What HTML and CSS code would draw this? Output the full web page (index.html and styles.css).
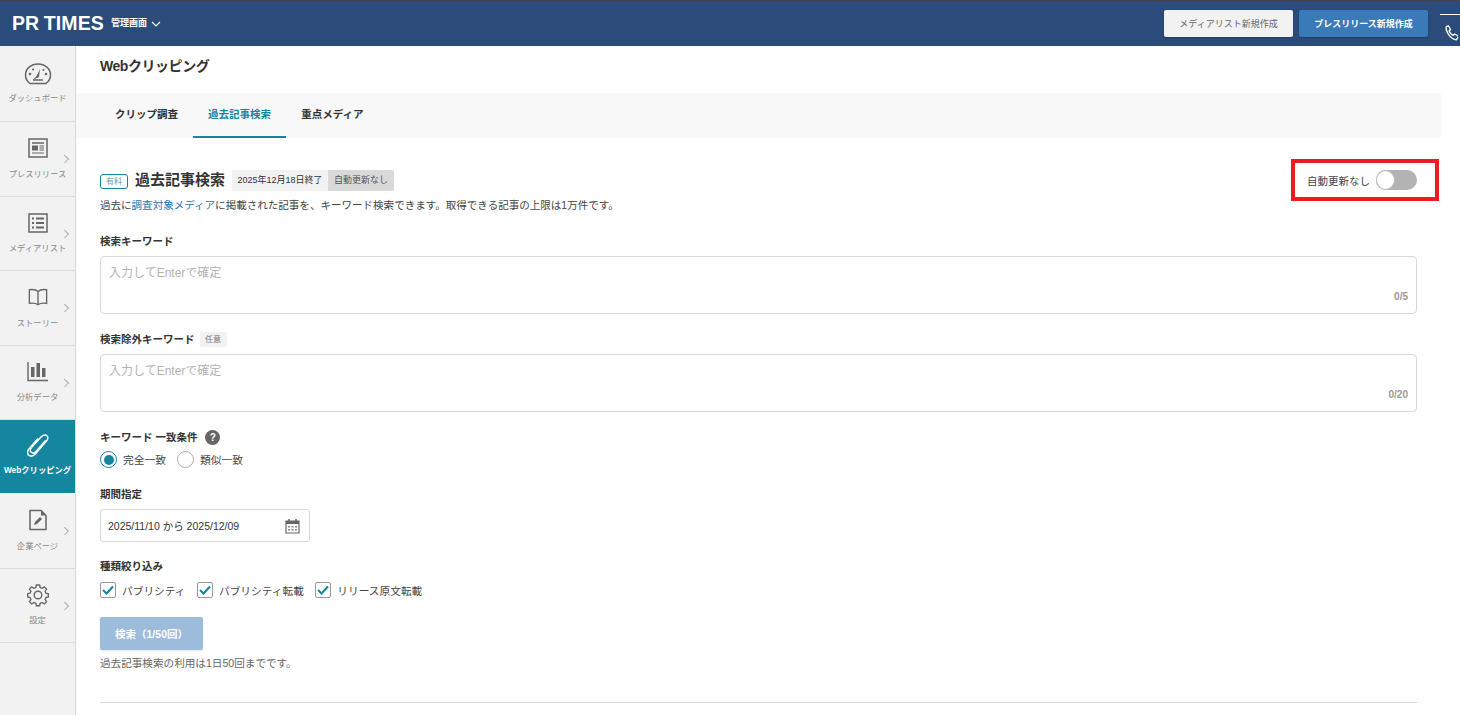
FILE: index.html
```html
<!DOCTYPE html>
<html lang="ja">
<head>
<meta charset="utf-8">
<title>Webクリッピング</title>
<link rel="stylesheet" href="styles.css">
</head>
<body>
<header class="topbar">
  <div class="brand">
    <span class="logo">PR TIMES</span>
    <span class="admin">管理画面</span>
    <svg class="admin-caret" width="10" height="6" viewBox="0 0 10 6"><path d="M1 1l4 4 4-4" fill="none" stroke="#fff" stroke-width="1.2"/></svg>
  </div>
  <div class="top-actions">
    <button class="btn-top btn-light">メディアリスト新規作成</button>
    <button class="btn-top btn-blue">プレスリリース新規作成</button>
    <div class="phone">
      <svg width="16" height="16" viewBox="0 0 16 16"><path d="M2.2 1.5L4.6 1l2 3.6-1.500 1.400c.7 1.800 2.200 3.400 4 4.300l1.500-1.300 3.400 2" fill="none" stroke="#fff" stroke-width="1.300"/><path d="M2.200 1.500C1.500 6 6 14 12.500 14.800l1.500-2.800" fill="none" stroke="#fff" stroke-width="1.300"/></svg>
    </div>
  </div>
</header>
<div class="shell">
  <nav class="sidebar">
    <a class="nav-item">
      <svg class="nav-icon" width="28" height="24" viewBox="0 0 28 24"><path d="M6 21.500h16c2.500-1.800 4.500-4.800 4.500-8.500C26.500 6.800 21 2 14 2S1.500 6.800 1.500 13c0 3.700 2 6.700 4.500 8.500z" fill="none" stroke="#666" stroke-width="1.500"/><path d="M9 18l6-3 1-8-3.500 7z" fill="#666"/><path d="M9 18h10" stroke="#666" stroke-width="1.500"/><circle cx="6" cy="12" r="1.300" fill="#666"/><circle cx="22" cy="12" r="1.300" fill="#666"/><circle cx="9" cy="7.500" r="1.100" fill="#666"/><circle cx="19.500" cy="8" r="1.100" fill="#666"/></svg>
      <span class="nav-label">ダッシュボード</span>
    </a>
    <a class="nav-item has-sub">
      <svg class="nav-icon" width="20" height="20" viewBox="0 0 20 20"><rect x="1" y="1" width="18" height="18" fill="none" stroke="#666" stroke-width="1.500"/><path d="M4 5h12" stroke="#666" stroke-width="1.500"/><rect x="4" y="7.500" width="6" height="5" fill="#666"/><path d="M11.500 8h4.500M11.500 10h4.500M11.500 12h4.500M4 15h12" stroke="#666" stroke-width="1.200"/></svg>
      <span class="nav-label">プレスリリース</span>
    </a>
    <a class="nav-item has-sub">
      <svg class="nav-icon" width="20" height="20" viewBox="0 0 20 20"><rect x="1" y="1" width="18" height="18" fill="none" stroke="#666" stroke-width="1.500"/><path d="M4 5.500h2M4 10h2M4 14.500h2M8 5.500h8M8 10h8M8 14.500h8" stroke="#666" stroke-width="1.800"/></svg>
      <span class="nav-label">メディアリスト</span>
    </a>
    <a class="nav-item has-sub">
      <svg class="nav-icon" width="20" height="20" viewBox="0 0 22 20"><path d="M11 4C9 2 5 1.500 1.500 2v15c3.500-.5 7.500 0 9.500 1.500 2-1.500 6-2 9.500-1.500V2C17 1.500 13 2 11 4zM11 4v14" fill="none" stroke="#666" stroke-width="1.500"/></svg>
      <span class="nav-label">ストーリー</span>
    </a>
    <a class="nav-item has-sub">
      <svg class="nav-icon" width="22" height="20" viewBox="0 0 22 20"><path d="M1 0v18.500h20" fill="none" stroke="#666" stroke-width="1.400"/><rect x="4" y="5" width="3.500" height="10" fill="#666"/><rect x="9.500" y="1" width="3.500" height="14" fill="#666"/><rect x="15" y="6" width="3.500" height="9" fill="#666"/></svg>
      <span class="nav-label">分析データ</span>
    </a>
    <a class="nav-item active">
      <svg class="nav-icon" width="22" height="24" viewBox="0 0 22 24"><path d="M18.500 6.500L9 17.500c-1.500 1.700-3.500 1.900-4.800.8-1.300-1.100-1.200-3.200.3-4.900L14.500 2.600c2.300-2.300 5-2 6 0 .7 1.500 0 3.400-1.500 5L8.500 19.800c-2.200 2.500-5 3-6.700 1.400C.2 19.700.3 17 2.300 14.600L11 4.500" fill="none" stroke="#fff" stroke-width="1.500"/></svg>
      <span class="nav-label">Webクリッピング</span>
    </a>
    <a class="nav-item has-sub">
      <svg class="nav-icon" width="18" height="21" viewBox="0 0 18 21"><path d="M1 1h11l5 5v14H1z" fill="none" stroke="#666" stroke-width="1.500"/><path d="M12 1v5h5z" fill="#666"/><path d="M5 15.500l1-3 5-5 2 2-5 5z" fill="#666"/></svg>
      <span class="nav-label">企業ページ</span>
    </a>
    <a class="nav-item has-sub">
      <svg class="nav-icon" width="24" height="24" viewBox="0 0 24 24"><circle cx="12" cy="12" r="3.800" fill="none" stroke="#666" stroke-width="1.400"/><path d="M10.200 1.500h3.600l.6 2.800 2.200.9 2.400-1.600 2.500 2.500-1.600 2.400.9 2.200 2.700.6v3.600l-2.700.6-.9 2.200 1.600 2.400-2.500 2.500-2.400-1.600-2.200.9-.6 2.700h-3.600l-.6-2.700-2.200-.9-2.400 1.600-2.500-2.500 1.600-2.400-.9-2.200-2.700-.6v-3.600l2.700-.6.9-2.200-1.600-2.400 2.500-2.500 2.400 1.600 2.200-.9z" transform="translate(1.200 .6) scale(.9)" fill="none" stroke="#666" stroke-width="1.500"/></svg>
      <span class="nav-label">設定</span>
    </a>
  </nav>
  <main class="content">
    <h1 class="page-title">Webクリッピング</h1>
    <div class="tabs">
      <a class="tab">クリップ調査</a>
      <a class="tab tab-active">過去記事検索</a>
      <a class="tab">重点メディア</a>
    </div>
    <section class="panel">
      <div class="panel-head">
        <div class="head-left">
          <span class="paid">有料</span>
          <h2 class="section-title">過去記事検索</h2>
          <span class="meta"><span class="meta-date">2025年12月18日終了</span><span class="meta-auto">自動更新なし</span></span>
        </div>
        <div class="auto-box">
          <span>自動更新なし</span>
          <span class="switch"><span class="knob"></span></span>
        </div>
      </div>
      <p class="desc">過去に<a class="link">調査対象メディア</a>に掲載された記事を、キーワード検索できます。取得できる記事の上限は1万件です。</p>

      <div class="field-label first">検索キーワード</div>
      <div class="textbox"><span class="ph">入力してEnterで確定</span><span class="count">0/5</span></div>

      <div class="field-label second">検索除外キーワード<span class="optional">任意</span></div>
      <div class="textbox"><span class="ph">入力してEnterで確定</span><span class="count">0/20</span></div>

      <div class="field-label third">キーワード 一致条件<span class="help">?</span></div>
      <div class="options radios">
        <label class="opt"><span class="radio on"></span>完全一致</label>
        <label class="opt"><span class="radio"></span>類似一致</label>
      </div>

      <div class="field-label fourth">期間指定</div>
      <div class="datebox">
        <span>2025/11/10 から 2025/12/09</span>
        <svg width="15" height="16" viewBox="0 0 15 16"><path d="M1 3h13v12H1z" fill="none" stroke="#666" stroke-width="1.200"/><path d="M1 3h13v3H1z" fill="#666"/><path d="M4 1v3M11 1v3" stroke="#666" stroke-width="1.500"/><path d="M3 8h2v1.500H3zM6.500 8h2v1.500h-2zM10 8h2v1.500h-2zM3 11h2v1.500H3zM6.500 11h2v1.500h-2zM10 11h2v1.500h-2z" fill="#888"/></svg>
      </div>

      <div class="field-label fifth">種類絞り込み</div>
      <div class="options checks">
        <label class="opt"><span class="check"><svg width="12" height="10" viewBox="0 0 12 10"><path d="M1 5l3.500 3.500L11 1.500" fill="none" stroke="#14869f" stroke-width="2"/></svg></span>パブリシティ</label>
        <label class="opt"><span class="check"><svg width="12" height="10" viewBox="0 0 12 10"><path d="M1 5l3.500 3.500L11 1.500" fill="none" stroke="#14869f" stroke-width="2"/></svg></span>パブリシティ転載</label>
        <label class="opt"><span class="check"><svg width="12" height="10" viewBox="0 0 12 10"><path d="M1 5l3.500 3.500L11 1.500" fill="none" stroke="#14869f" stroke-width="2"/></svg></span>リリース原文転載</label>
      </div>

      <button class="search-btn">検索（1/50回）</button>
      <p class="note">過去記事検索の利用は1日50回までです。</p>
      <hr class="rule">
    </section>
  </main>
</div>
</body>
</html>
```
FILE: styles.css
```css
* { box-sizing: border-box; }
html, body { margin: 0; height: 715px; overflow: hidden; }
body {
  font-family: "Liberation Sans", "Noto Sans CJK JP", sans-serif;
  color: #333;
  background: #fff;
  font-size: 11px;
}
button { font-family: inherit; border: 0; }
.topbar {
  height: 46px;
  background: #2b4b7a;
  border-top: 1px solid #4a4048;
  display: flex;
  align-items: center;
  justify-content: space-between;
  padding-left: 12px;
}
.brand { display: flex; align-items: center; color: #fff; }
.logo {
  font-weight: 700;
  font-size: 19.500px;
  letter-spacing: .1px;
  word-spacing: -1px;
  width: 99px;
  white-space: nowrap;
}
.admin { font-size: 9px; font-weight: 700; width: 37px; margin-top: -2px; }
.admin-caret { margin-left: 3px; margin-top: 1px; }
.top-actions { display: flex; align-items: center; height: 100%; }
.btn-top {
  height: 27px;
  border-radius: 2px;
  font-size: 9px;
  padding: 0;
  box-shadow: 0 1px 2px rgba(0,0,0,.2);
}
.btn-light { width: 129px; background: #f2f2f2; color: #666; margin-right: 6px; }
.btn-blue { width: 129px; background: #3b7ab8; color: #fff; font-weight: 700; margin-right: 12px; }
.phone {
  width: 20px;
  height: 32px;
  align-self: flex-end;
  border-top: 1px solid #fff;
  padding: 10px 0 0 4px;
  overflow: hidden;
}
.shell { display: flex; height: 669px; }
.sidebar {
  width: 76px;
  flex: none;
  background: #f2f2f2;
  border-right: 1px solid #d9d9d9;
  padding-top: 2px;
}
.nav-item {
  display: flex;
  flex-direction: column;
  align-items: center;
  position: relative;
  height: 74.400px;
  padding-top: 14px;
  border-bottom: 1px solid #dcdcdc;
  color: #888;
}
.nav-icon { height: 24px; display: block; }
.nav-label { font-size: 8.300px; margin-top: 6px; white-space: nowrap; line-height: 12px; }
.has-sub .nav-label { margin-top: 7.500px; }
.nav-item.has-sub::after {
  content: "";
  position: absolute;
  right: 8px;
  top: 34px;
  width: 4.500px;
  height: 4.500px;
  border-top: 1px solid #aaa;
  border-right: 1px solid #aaa;
  transform: rotate(45deg);
}
.nav-item.active { background: #14869f; color: #fff; border-bottom: 0; height: 73.400px; margin-bottom: 1px; }
.nav-item.active .nav-label { font-weight: 700; }
.content { flex: 1; min-width: 0; padding-left: 24px; padding-right: 19px; }
.page-title { font-size: 14px; font-weight: 700; margin: 0; height: 47px; line-height: 40px; letter-spacing: -.45px; }
.tabs { height: 45px; background: #f8f8f8; display: flex; margin-left: -24px; padding-left: 24px; }
.tab {
  width: 93px;
  text-align: center;
  line-height: 42px;
  font-weight: 700;
  font-size: 10.500px;
  height: 45px;
  color: #333;
}
.tab-active { color: #14869f; border-bottom: 2px solid #14869f; }
.panel { padding-top: 30px; }
.panel-head { display: flex; justify-content: space-between; align-items: flex-start; height: 28px; }
.head-left { display: flex; align-items: center; margin-top: 1px; }
.paid {
  width: 28px; height: 15px;
  margin-top: 2px;
  border: 1px solid #14869f;
  border-radius: 3px;
  color: #5d9fb2;
  font-size: 8px;
  line-height: 13px;
  text-align: center;
}
.section-title { font-size: 15px; font-weight: 700; margin: 0 7px; line-height: 22px; }
.meta { display: flex; height: 21px; line-height: 21px; font-size: 9px; }
.meta-date { background: #f2f2f2; padding: 0 5.500px; }
.meta-auto { background: #d9d9d9; padding: 0 6px; color: #555; border-radius: 0 2px 2px 0; }
.auto-box {
  width: 148px;
  height: 42px;
  margin-top: -9px;
  margin-right: 2px;
  border: 4px solid #ed1c24;
  display: flex;
  align-items: center;
  padding-left: 12px;
  font-size: 10.500px;
  color: #444;
}
.switch { width: 41px; height: 20px; border-radius: 10px; background: #b3b3b3; margin-left: 6px; position: relative; }
.knob { position: absolute; left: 0; top: 0; width: 19px; height: 20px; background: #fff; border-radius: 50%; border: 1px solid #bbb; }
.desc { margin: 1px 0 0; font-size: 10.540px; line-height: 16px; color: #444; white-space: nowrap; }
.link { color: #2b73b5; }
.field-label { font-size: 10.500px; font-weight: 700; color: #333; line-height: 16px; display: flex; align-items: center; }
.field-label.first { margin-top: 20px; margin-bottom: 7px; }
.field-label.second { margin-top: 17px; margin-bottom: 7px; }
.field-label.third { margin-top: 17px; }
.field-label.fourth { margin-top: 18px; margin-bottom: 7px; }
.field-label.fifth { margin-top: 16px; }
.optional { background: #f2f2f2; color: #777; font-weight: 400; font-size: 8px; width: 27px; height: 15px; line-height: 15px; text-align: center; border-radius: 2px; margin-left: 5px; }
.help { width: 15px; height: 15px; border-radius: 50%; background: #666; color: #fff; font-size: 10px; text-align: center; line-height: 15px; margin-left: 8px; }
.textbox {
  position: relative;
  height: 58px;
  width: 1317px;
  border: 1px solid #d9d9d9;
  border-radius: 4px;
  padding: 8px;
}
.ph { color: #b3b3b3; font-size: 12px; line-height: 16px; display: block; }
.count { position: absolute; right: 8px; bottom: 10px; color: #999; font-size: 10px; font-weight: 700; line-height: 12px; }
.options { display: flex; align-items: center; font-size: 10.500px; color: #444; }
.radios { margin-top: 6px; font-size: 10.750px; }
.opt { display: flex; align-items: center; margin-right: 11px; }
.radio { width: 17px; height: 17px; border: 1px solid #aaa; border-radius: 50%; background: #fff; margin-right: 6px; position: relative; }
.radio.on { border-color: #14869f; }
.radio.on::after { content: ""; position: absolute; left: 2.500px; top: 2.500px; width: 10px; height: 10px; border-radius: 50%; background: #14869f; }
.datebox {
  width: 210px;
  height: 33px;
  border: 1px solid #d9d9d9;
  border-radius: 3px;
  display: flex;
  align-items: center;
  justify-content: space-between;
  padding: 0 9px 0 7px;
  font-size: 10.500px;
}
.checks { margin-top: 8px; font-size: 10.700px; }
.checks .opt { margin-right: 11.500px; }
.check { width: 16px; height: 16px; border: 1px solid #999; border-radius: 2px; margin-right: 6px; display: flex; align-items: center; justify-content: center; }
.search-btn {
  display: block;
  width: 103px;
  height: 33px;
  margin-top: 19px;
  background: #9dbcdc;
  color: #fff;
  font-weight: 700;
  font-size: 10.500px;
  border-radius: 2px;
  box-shadow: 0 1px 2px rgba(0,0,0,.1);
  padding: 0;
}
.note { margin: 6px 0 0; font-size: 10.600px; color: #666; line-height: 15px; }
.rule { border: 0; border-top: 1px solid #d9d9d9; margin: 31px 0 0; width: 1317px; }
```
